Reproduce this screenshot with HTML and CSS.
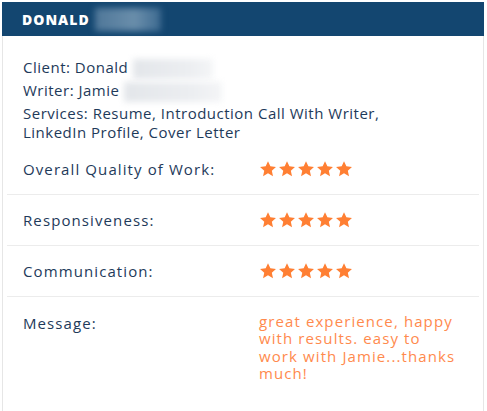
FILE: index.html
```html
<!DOCTYPE html>
<html lang="en">

<head>
  <meta charset="UTF-8" />
  <title>Review</title>
  <link rel="stylesheet" href="styles.css">
</head>

<body>
  <div class="card">
    <div class="card-header">
      <span class="name">DONALD</span>
      <span class="blur blur-dark"></span>
    </div>

    <div class="card-body">
      <div class="info">
        <p>Client: Donald <span class="blur blur-light blur-client"></span></p>
        <p>Writer: Jamie <span class="blur blur-light blur-writer"></span></p>
        <p>Services: Resume, Introduction Call With Writer, LinkedIn Profile, Cover Letter</p>
      </div>

      <div class="row">
        <div class="label">Overall Quality of Work:</div>
        <div class="stars">
          <svg viewBox="0 0 24 24"><path d="M12 1.5l3.2 6.9 7.4.8-5.5 5 1.6 7.4L12 17.8l-6.6 3.8L7 14.2l-5.6-5 7.5-.8z"/></svg>
          <svg viewBox="0 0 24 24"><path d="M12 1.5l3.2 6.9 7.4.8-5.5 5 1.6 7.4L12 17.8l-6.6 3.8L7 14.2l-5.6-5 7.5-.8z"/></svg>
          <svg viewBox="0 0 24 24"><path d="M12 1.5l3.2 6.9 7.4.8-5.5 5 1.6 7.4L12 17.8l-6.6 3.8L7 14.2l-5.6-5 7.5-.8z"/></svg>
          <svg viewBox="0 0 24 24"><path d="M12 1.5l3.2 6.9 7.4.8-5.5 5 1.6 7.4L12 17.8l-6.6 3.8L7 14.2l-5.6-5 7.5-.8z"/></svg>
          <svg viewBox="0 0 24 24"><path d="M12 1.5l3.2 6.9 7.4.8-5.5 5 1.6 7.4L12 17.8l-6.6 3.8L7 14.2l-5.6-5 7.5-.8z"/></svg>
        </div>
      </div>

      <div class="row">
        <div class="label">Responsiveness:</div>
        <div class="stars">
          <svg viewBox="0 0 24 24"><path d="M12 1.5l3.2 6.9 7.4.8-5.5 5 1.6 7.4L12 17.8l-6.6 3.8L7 14.2l-5.6-5 7.5-.8z"/></svg>
          <svg viewBox="0 0 24 24"><path d="M12 1.5l3.2 6.9 7.4.8-5.5 5 1.6 7.4L12 17.8l-6.6 3.8L7 14.2l-5.6-5 7.5-.8z"/></svg>
          <svg viewBox="0 0 24 24"><path d="M12 1.5l3.2 6.9 7.4.8-5.5 5 1.6 7.4L12 17.8l-6.6 3.8L7 14.2l-5.6-5 7.5-.8z"/></svg>
          <svg viewBox="0 0 24 24"><path d="M12 1.5l3.2 6.9 7.4.8-5.5 5 1.6 7.4L12 17.8l-6.6 3.8L7 14.2l-5.6-5 7.5-.8z"/></svg>
          <svg viewBox="0 0 24 24"><path d="M12 1.5l3.2 6.9 7.4.8-5.5 5 1.6 7.4L12 17.8l-6.6 3.8L7 14.2l-5.6-5 7.5-.8z"/></svg>
        </div>
      </div>

      <div class="row">
        <div class="label">Communication:</div>
        <div class="stars">
          <svg viewBox="0 0 24 24"><path d="M12 1.5l3.2 6.9 7.4.8-5.5 5 1.6 7.4L12 17.8l-6.6 3.8L7 14.2l-5.6-5 7.5-.8z"/></svg>
          <svg viewBox="0 0 24 24"><path d="M12 1.5l3.2 6.9 7.4.8-5.5 5 1.6 7.4L12 17.8l-6.6 3.8L7 14.2l-5.6-5 7.5-.8z"/></svg>
          <svg viewBox="0 0 24 24"><path d="M12 1.5l3.2 6.9 7.4.8-5.5 5 1.6 7.4L12 17.8l-6.6 3.8L7 14.2l-5.6-5 7.5-.8z"/></svg>
          <svg viewBox="0 0 24 24"><path d="M12 1.5l3.2 6.9 7.4.8-5.5 5 1.6 7.4L12 17.8l-6.6 3.8L7 14.2l-5.6-5 7.5-.8z"/></svg>
          <svg viewBox="0 0 24 24"><path d="M12 1.5l3.2 6.9 7.4.8-5.5 5 1.6 7.4L12 17.8l-6.6 3.8L7 14.2l-5.6-5 7.5-.8z"/></svg>
        </div>
      </div>

      <div class="row row-message">
        <div class="label">Message:</div>
        <div class="message">great experience, happy
with results. easy to
work with Jamie...thanks
much!</div>
      </div>
    </div>
  </div>
</body>

</html>
```

FILE: styles.css
```css
body {
  margin: 0;
  padding: 2px 3px 0 2px;
  background: #ffffff;
  font-family: "Open Sans", sans-serif;
  color: #1e3a5a;
}

.card {
  border: 1px solid #e6e6e6;
  border-top: none;
  height: 420px;
}

/* barre du haut */
.card-header {
  display: flex;
  align-items: center;
  height: 34px;
  margin: 0 -1px;
  padding-left: 20px;
  background: #134670;
}

.name {
  color: #ffffff;
  font-size: 14px;
  font-weight: 800;
  letter-spacing: 1px;
}

.blur {
  display: inline-block;
  vertical-align: middle;
  filter: blur(3px);
}

.blur-dark {
  width: 66px;
  height: 23px;
  margin-left: 5px;
  background: linear-gradient(90deg, #4f7799, #6a8eab 60%, #3d6a90);
}

.blur-light {
  height: 20px;
  background: linear-gradient(90deg, #e3e6ea, #eceef1 70%, #f4f5f7);
}

.blur-client {
  width: 80px;
}

.blur-writer {
  width: 98px;
}

.card-body {
  padding: 0 4px;
}

.info {
  max-width: 420px;
  padding: 22px 16px 0;
}

.info p {
  margin: 0 0 2px;
  font-size: 15px;
  line-height: 19px;
  letter-spacing: 0.5px;
}

.row {
  display: flex;
  align-items: center;
  height: 51px;
  padding-left: 16px;
  border-bottom: 1px solid #ececec;
  box-sizing: border-box;
  font-size: 15px;
  letter-spacing: 1.1px;
}

.row:last-child {
  border-bottom: none;
}

.label {
  width: 236px;
}

.stars {
  display: flex;
  gap: 1px;
}

.stars svg {
  width: 18px;
  height: 18px;
  fill: #ff7f33;
}

.row-message {
  align-items: flex-start;
  height: auto;
  padding-top: 16px;
}

.message {
  white-space: pre-line;
  color: #ff8a4d;
  line-height: 17.5px;
}
```
